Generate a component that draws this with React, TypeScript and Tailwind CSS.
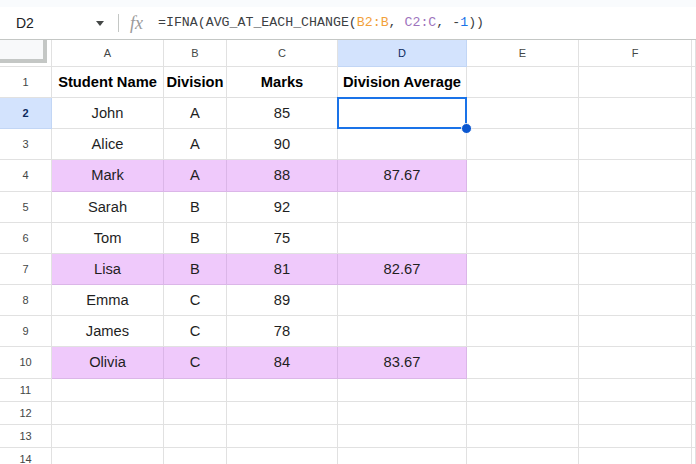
import React from "react";

const cols = [
  { key: "A", w: "w-[112px]" },
  { key: "B", w: "w-[63px]" },
  { key: "C", w: "w-[111px]" },
  { key: "D", w: "w-[129px]" },
  { key: "E", w: "w-[112px]" },
  { key: "F", w: "w-[113px]" },
  { key: "", w: "flex-1" },
];

type Row = { n: number; h: string; cells: string[]; bold?: boolean; hl?: boolean };

const rows: Row[] = [
  { n: 1, h: "h-[31px]", cells: ["Student Name", "Division", "Marks", "Division Average"], bold: true },
  { n: 2, h: "h-[31px]", cells: ["John", "A", "85", ""] },
  { n: 3, h: "h-[31px]", cells: ["Alice", "A", "90", ""] },
  { n: 4, h: "h-[32px]", cells: ["Mark", "A", "88", "87.67"], hl: true },
  { n: 5, h: "h-[31px]", cells: ["Sarah", "B", "92", ""] },
  { n: 6, h: "h-[31px]", cells: ["Tom", "B", "75", ""] },
  { n: 7, h: "h-[31px]", cells: ["Lisa", "B", "81", "82.67"], hl: true },
  { n: 8, h: "h-[31px]", cells: ["Emma", "C", "89", ""] },
  { n: 9, h: "h-[31px]", cells: ["James", "C", "78", ""] },
  { n: 10, h: "h-[32px]", cells: ["Olivia", "C", "84", "83.67"], hl: true },
  { n: 11, h: "h-[23px]", cells: [] },
  { n: 12, h: "h-[23px]", cells: [] },
  { n: 13, h: "h-[23px]", cells: [] },
  { n: 14, h: "h-[23px]", cells: [] },
];

function FormulaBar() {
  return (
    <div className="flex h-[33px] items-center border-b border-[#c4c7c5] bg-white">
      <div className="w-[82px] pl-[16px] text-[14px] text-[#202124]">D2</div>
      <div className="flex w-[36px] items-center">
        <span className="ml-[14px] h-0 w-0 border-x-[4px] border-t-[5px] border-x-transparent border-t-[#444746]" />
      </div>
      <div className="h-[18px] w-px bg-[#c4c7c5]" />
      <span
        className="ml-[11px] w-[28px] text-[18px] italic text-[#9a9a9a]"
        style={{ fontFamily: '"Liberation Serif", serif' }}
      >
        fx
      </span>
      <span
        className="text-[13.25px] text-[#3c4043]"
        style={{ fontFamily: '"Liberation Mono", monospace' }}
      >
        =IFNA(AVG_AT_EACH_CHANGE(
        <span className="text-[#f2a13a]">B2:B</span>,{" "}
        <span className="text-[#9e74bd]">C2:C</span>, -
        <span className="text-[#1a73e8]">1</span>))
      </span>
    </div>
  );
}

function HeaderRow() {
  return (
    <div className="flex h-[27px]">
      <div className="w-[52px] border-r border-b border-[#e1e1e1] bg-white">
        <div className="h-[23px] w-[47px] border-r-4 border-b-4 border-[#c4c7c5] bg-[#f8f9fa]" />
      </div>
      {cols.map((c) => (
        <div
          key={c.key}
          className={`${c.w} flex items-center justify-center border-r border-b text-[11px] ${
            c.key === "D"
              ? "border-[#c2d6f5] bg-[#d3e3fd] text-[#0b2a5c]"
              : "border-[#e1e1e1] bg-white text-[#444746]"
          }`}
        >
          {c.key}
        </div>
      ))}
    </div>
  );
}

function GridRow({ row }: { row: Row }) {
  const sel = row.n === 2;
  return (
    <div className={`flex ${row.h}`}>
      <div
        className={`flex w-[52px] items-center justify-center border-r border-b text-[11px] ${
          sel
            ? "border-[#c2d6f5] bg-[#d3e3fd] font-bold text-[#0b2a5c]"
            : "border-[#e1e1e1] bg-white text-[#444746]"
        }`}
      >
        {row.n}
      </div>
      {cols.map((c, i) => {
        const purple = row.hl && i < 4;
        return (
          <div
            key={i}
            className={`${c.w} relative flex items-center justify-center border-r border-b text-[14.7px] text-[#1f1f1f] ${
              purple ? "border-[#dbb6e8] bg-[#efc9fb]" : "border-[#e1e1e1] bg-white"
            } ${row.bold ? "font-bold text-black" : ""}`}
          >
            {row.cells[i] ?? ""}
            {sel && c.key === "D" && (
              <>
                <div className="absolute -top-px -left-px z-10 h-[32px] w-[130px] border-2 border-[#1a73e8]" />
                <div className="absolute -right-[6px] -bottom-[6px] z-20 h-[11px] w-[11px] rounded-full border border-white bg-[#0b57d0]" />
              </>
            )}
          </div>
        );
      })}
    </div>
  );
}

export default function App() {
  return (
    <div
      className="h-[464px] w-[696px] overflow-hidden bg-white"
      style={{ fontFamily: '"Liberation Sans", Arial, sans-serif' }}
    >
      <div className="h-[7px] bg-[#f9fbfd]" />
      <FormulaBar />
      <HeaderRow />
      {rows.map((r) => (
        <GridRow key={r.n} row={r} />
      ))}
    </div>
  );
}
